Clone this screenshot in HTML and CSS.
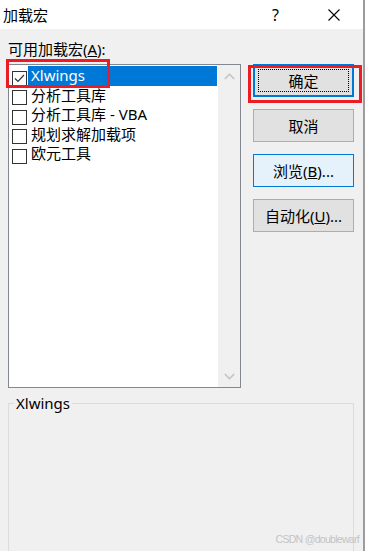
FILE: index.html
```html
<!DOCTYPE html>
<html lang="zh-CN">
<head>
<meta charset="utf-8">
<title>加载宏</title>
<link rel="stylesheet" href="styles.css">
</head>
<body>
<div class="dialog">
  <div class="titlebar">
    <span class="title">加载宏</span>
    <div class="title-controls">
      <span class="help">?</span>
      <svg class="close" width="12" height="12" viewBox="0 0 12 12"><path d="M0.5 0.5 L11.5 11.5 M11.5 0.5 L0.5 11.5" stroke="#000" stroke-width="1.1" fill="none"/></svg>
    </div>
  </div>
  <div class="content">
    <div class="top">
      <div class="left">
        <div class="label">可用加载宏(<u>A</u>):</div>
        <div class="listbox">
          <div class="items">
            <div class="item">
              <span class="checkbox"><svg width="13" height="13" viewBox="0 0 13 13"><path d="M2 6.5 L5 9.5 L11 3" stroke="#333" stroke-width="1.2" fill="none"/></svg></span>
              <span class="item-label selected">Xlwings</span>
            </div>
            <div class="item"><span class="checkbox"></span><span class="item-label">分析工具库</span></div>
            <div class="item"><span class="checkbox"></span><span class="item-label">分析工具库 - VBA</span></div>
            <div class="item"><span class="checkbox"></span><span class="item-label">规划求解加载项</span></div>
            <div class="item"><span class="checkbox"></span><span class="item-label">欧元工具</span></div>
          </div>
          <div class="scrollbar">
            <div class="arrow"><svg width="11" height="7" viewBox="0 0 11 7"><path d="M0.8 6 L5.5 1.3 L10.2 6" stroke="#c2c2c2" stroke-width="1.5" fill="none"/></svg></div>
            <div class="arrow"><svg width="11" height="7" viewBox="0 0 11 7"><path d="M0.8 1 L5.5 5.7 L10.2 1" stroke="#c2c2c2" stroke-width="1.5" fill="none"/></svg></div>
          </div>
        </div>
      </div>
      <div class="buttons">
        <button class="btn btn-default">确定</button>
        <button class="btn">取消</button>
        <button class="btn btn-hover">浏览(<u>B</u>)...</button>
        <button class="btn">自动化(<u>U</u>)...</button>
      </div>
    </div>
    <fieldset class="group">
      <legend class="group-title">Xlwings</legend>
    </fieldset>
  </div>
  <div class="mark mark-item"></div>
  <div class="mark mark-ok"></div>
  <div class="watermark">CSDN @doublewarf</div>
</div>
</body>
</html>
```

FILE: styles.css
```css
* { box-sizing: border-box; }
html, body { margin: 0; padding: 0; }
body {
  font-family: "Noto Sans", "Noto Sans CJK SC", sans-serif;
  font-size: 15px;
  color: #000;
  background: #f0f0f0;
}
.dialog {
  position: relative;
  width: 365px;
  height: 551px;
  overflow: hidden;
  background: #f0f0f0;
  border-right: 2px solid #9c9c9c;
}
.titlebar {
  height: 29px;
  background: #fff;
  display: flex;
  align-items: center;
  padding-left: 3px;
}
.title { font-size: 15px; line-height: 20px; }
.title-controls {
  margin-left: auto;
  display: flex;
  align-items: center;
  margin-right: 23px;
}
.help {
  font-family: "Noto Sans", sans-serif;
  font-size: 16px;
  line-height: 20px;
  width: 8px;
  margin-right: 48px;
}
.close { display: block; margin-top: 1px; }
.content { padding-left: 8px; }
.top { display: flex; align-items: flex-start; }
.left { width: 233px; }
.label {
  padding-top: 10px;
  line-height: 20px;
  height: 30px;
}
.listbox {
  margin-top: 5px;
  height: 324px;
  border: 1px solid #828790;
  background: #fff;
  display: flex;
}
.items { flex: 1; padding-top: 1px; }
.item {
  display: flex;
  align-items: flex-end;
  height: 19.5px;
  padding-left: 3px;
}
.checkbox {
  width: 15px;
  height: 15px;
  border: 1px solid #333;
  background: #fff;
  display: flex;
  align-items: center;
  justify-content: center;
  flex: none;
}
.checkbox svg { display: block; }
.item-label {
  flex: 1;
  align-self: stretch;
  margin-left: 1px;
  margin-right: 1px;
  padding-left: 3px;
  line-height: 19.5px;
  white-space: nowrap;
}
.item-label.selected { background: #0078d7; color: #fff; }
.scrollbar {
  width: 22px;
  background: #f0f0f0;
  display: flex;
  flex-direction: column;
  justify-content: space-between;
}
.arrow {
  height: 22px;
  display: flex;
  align-items: center;
  justify-content: center;
}
.arrow svg { display: block; }
.buttons {
  margin-left: 12px;
  margin-top: 35px;
  display: flex;
  flex-direction: column;
  gap: 12px;
}
.btn {
  width: 101px;
  height: 33px;
  background: #e1e1e1;
  border: 1px solid #adadad;
  font-family: "Noto Sans", "Noto Sans CJK SC", sans-serif;
  font-size: 15px;
  color: #000;
  padding: 0;
  line-height: 20px;
}
.btn-default {
  border: 2px solid #0078d7;
  outline: 1px dotted #000;
  outline-offset: -6px;
}
.btn-hover {
  background: #e5f1fb;
  border-color: #0078d7;
}
.group {
  margin: 5px 0 0 0;
  padding: 0;
  width: 346px;
  height: 170px;
  border: 1px solid #dcdcdc;
  min-inline-size: 0;
}
.group-title {
  margin-left: 5px;
  padding: 0 2px;
  line-height: 20px;
  font-size: 15px;
}
.mark {
  position: absolute;
  border: 3px solid #ed1c24;
}
.mark-item { left: 6px; top: 59px; width: 104px; height: 29px; }
.mark-ok { left: 248px; top: 65px; width: 114px; height: 38px; }
.watermark {
  position: absolute;
  right: 4px;
  top: 532px;
  font-family: "Liberation Sans", sans-serif;
  font-size: 10.5px;
  letter-spacing: -0.7px;
  color: #c4c4c4;
  line-height: 14px;
}
```
